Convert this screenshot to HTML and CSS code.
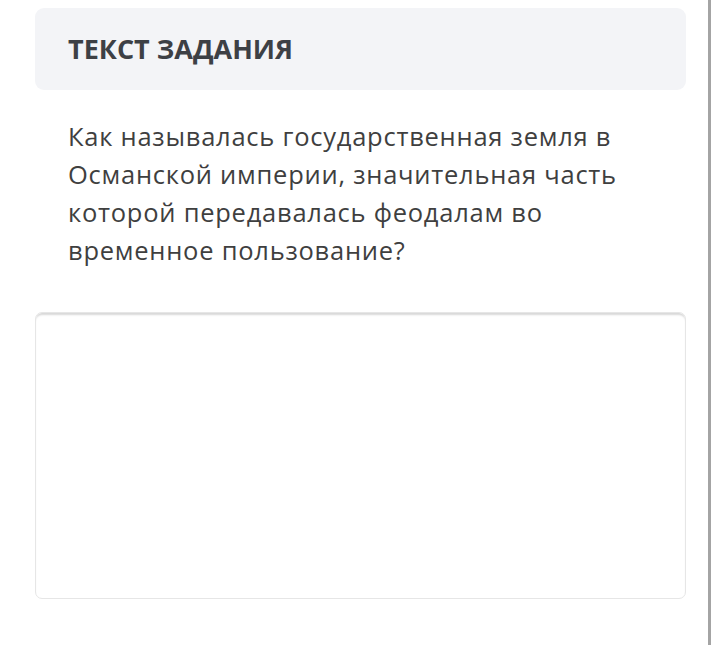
FILE: index.html
```html
<!DOCTYPE html>
<html lang="ru">
<head>
    <meta charset="UTF-8">
    <meta name="viewport" content="width=device-width, initial-scale=1.0">
    <title>Текст задания</title>
    <link rel="stylesheet" href="styles.css">
</head>
<body>
    <div class="page">
        <div class="content">
            <div class="task-header">
                <h2>ТЕКСТ ЗАДАНИЯ</h2>
            </div>
            <p class="task-text">Как называлась государственная земля в Османской империи, значительная часть которой передавалась феодалам во временное пользование?</p>
            <textarea class="answer" name="answer"></textarea>
        </div>
        <div class="edge"></div>
    </div>
</body>
</html>
```

FILE: styles.css
```css
body {
    margin: 0;
    padding: 0;
    background-color: #FFFFFF;
    font-family: "Open Sans", Arial, sans-serif;
    color: #3a3a3a;
}

.page {
    display: flex;
    height: 645px;
}

.content {
    width: 651px;
    padding: 8px 0 0 35px;
}

.edge {
    width: 3px;
    margin-left: 22px;
    background-color: #a4a4a4;
}

.task-header {
    background-color: #f3f4f7;
    border-radius: 9px;
    height: 82px;
    padding: 0 33px;
    display: flex;
    align-items: center;
}

.task-header h2 {
    margin: 0 0 2px 0;
    font-size: 27px;
    font-weight: 700;
    color: #3d4045;
    letter-spacing: 0;
}

.task-text {
    margin: 27px 0 0 0;
    padding: 0 33px;
    font-size: 25.5px;
    line-height: 38px;
    letter-spacing: 0.75px;
    color: #3f3f3f;
}

.answer {
    display: block;
    width: 651px;
    height: 287px;
    margin-top: 43px;
    border: 1px solid #e6e6e6;
    border-radius: 7px;
    box-shadow: inset 0 3px 2px -1px #d8d8d8;
    box-sizing: border-box;
    resize: none;
    font-family: "Open Sans", Arial, sans-serif;
}
```
